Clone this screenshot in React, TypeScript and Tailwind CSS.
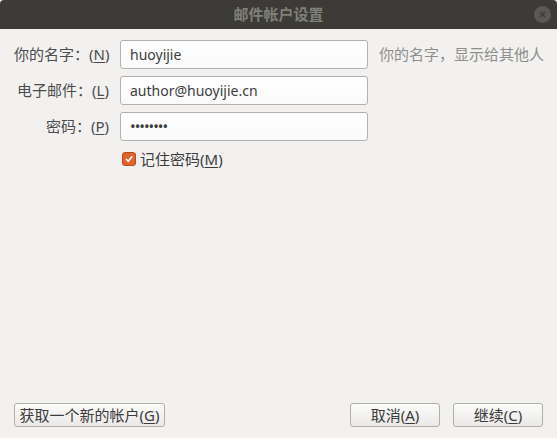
import React from "react";

const font = { fontFamily: '"Noto Sans", "Noto Sans CJK SC", sans-serif' };

function Field({ label, mnemonic, value, hint, password }: { label: string; mnemonic: string; value: string; hint?: string; password?: boolean }) {
    return (
        <>
            <div className="text-right text-[15px] text-[#4c4c4c] leading-none whitespace-nowrap">
                {label}：(<span className="underline underline-offset-2">{mnemonic}</span>)
            </div>
            <div className="h-[29px] rounded-[3px] border border-[#b3b2ae] bg-gradient-to-b from-white to-[#fafafa] px-[9px] flex items-center text-[14px] text-[#3c3c3c]">
                {password ? <span className="text-[15px] tracking-[-1px]">••••••••</span> : value}
            </div>
            <div className="text-[15px] text-[#8e8e8b] whitespace-nowrap">{hint}</div>
        </>
    );
}

function Button({ children, className }: { children: React.ReactNode; className: string }) {
    return (
        <button className={"h-[24px] rounded-[3px] border border-[#b1afab] bg-gradient-to-b from-[#fbfbfa] to-[#eae9e7] text-[15px] text-[#3c3c3c] flex items-center justify-center " + className}>
            {children}
        </button>
    );
}

export default function App() {
    return (
        <div className="w-[557px] h-[438px] flex flex-col bg-[#f2f1f0]" style={font}>
            <div className="h-[29px] bg-[#3c3b37] flex items-center justify-center relative rounded-t-[4px]">
                <span className="text-[15px] font-bold text-[#807f7a]">邮件帐户设置</span>
                <div className="absolute right-[6px] top-[6px] w-[17px] h-[17px] rounded-full bg-[#5a5955] flex items-center justify-center">
                    <svg width="7" height="7" viewBox="0 0 7 7"><path d="M1 1L6 6M6 1L1 6" stroke="#3c3b37" strokeWidth="1.3" /></svg>
                </div>
            </div>
            <div className="flex-1 flex flex-col px-[14px] pt-[11px] pb-[11px]">
                <div className="grid grid-cols-[95px_248px_auto] gap-x-[11px] gap-y-[7px] items-center">
                    <Field label="你的名字" mnemonic="N" value="huoyijie" hint="你的名字，显示给其他人" />
                    <Field label="电子邮件" mnemonic="L" value="author@huoyijie.cn" />
                    <Field label="密码" mnemonic="P" value="" password />
                </div>
                <div className="flex items-center gap-[4px] ml-[108px] mt-[7px]">
                    <div className="w-[14px] h-[14px] rounded-[3px] bg-[#e2612d] border border-[#b9481c] flex items-center justify-center">
                        <svg width="10" height="10" viewBox="0 0 10 10"><path d="M2 5L4.2 7.3L8.3 2.3" stroke="white" strokeWidth="1.7" fill="none" /></svg>
                    </div>
                    <span className="text-[15px] text-[#3c3c3c]">记住密码(<span className="underline underline-offset-2">M</span>)</span>
                </div>
                <div className="flex-1" />
                <div className="flex items-center">
                    <Button className="w-[151px]">获取一个新的帐户(<span className="underline underline-offset-2">G</span>)</Button>
                    <div className="flex-1" />
                    <Button className="w-[90px]">取消(<span className="underline underline-offset-2">A</span>)</Button>
                    <Button className="w-[90px] ml-[13px]">继续(<span className="underline underline-offset-2">C</span>)</Button>
                </div>
            </div>
        </div>
    );
}
